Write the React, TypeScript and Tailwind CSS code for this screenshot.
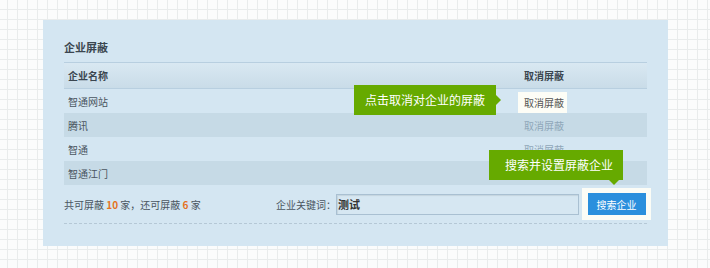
import React from "react";

const rows = [
  { name: "智通网站", active: true },
  { name: "腾讯", active: false },
  { name: "智通", active: false },
  { name: "智通江门", active: false },
];

export default function App() {
  return (
    <div
      className="w-[710px] h-[268px] pt-[20px] pl-[43px] bg-[#fbfcfc] bg-[linear-gradient(to_right,#e9ecec_1px,transparent_1px),linear-gradient(to_bottom,#e9ecec_1px,transparent_1px)] bg-[size:10px_10px] bg-[position:7px_9px]"
      style={{ fontFamily: '"Noto Sans CJK SC", "Noto Sans", sans-serif' }}
    >
      <div className="relative w-[625px] h-[226px] bg-[#d4e6f2] px-[21px] pt-[19px]">
        <div className="h-[23px] text-[11px] leading-[16px] font-bold text-[#3b4650]">企业屏蔽</div>

        {/* header */}
        <div className="flex h-[27px] items-center border-t border-b border-[#b8cfe0] bg-linear-to-b from-[#d9e8f2] to-[#c9dce8] text-[10px] font-bold text-[#3b4650]">
          <div className="flex-1 pl-[4px]">企业名称</div>
          <div className="w-[129px] pl-[6px]">取消屏蔽</div>
        </div>

        {rows.map((r, i) => (
          <div
            key={r.name}
            className={`flex h-[24px] items-center text-[10px] ${i % 2 === 1 ? "bg-[#c6dae6]" : ""}`}
          >
            <div className="flex-1 pl-[4px] text-[#4a5560]">{r.name}</div>
            <div className="w-[129px]">
              {r.active ? (
                <div className="mt-[3px] flex h-[21px] w-[49px] items-center pl-[6px] bg-[#fdfdf6] text-[#555]">取消屏蔽</div>
              ) : (
                <div className="pl-[6px] text-[#8fa7b9]">取消屏蔽</div>
              )}
            </div>
          </div>
        ))}

        {/* footer */}
        <div className="flex h-[39px] items-center border-b border-dashed border-[#b5c8d6] text-[10px] text-[#4a5560]">
          <div className="flex-1">
            共可屏蔽 <span className="font-bold text-[#e4731f]">10</span> 家，还可屏蔽{" "}
            <span className="font-bold text-[#e4731f]">6</span> 家
          </div>
          <div>企业关键词：</div>
          <div className="flex h-[21px] w-[243px] items-center border border-[#a9c0d2] bg-[#d6e7f2] pl-[1px] text-[11px] font-bold text-[#333] shadow-[inset_1px_1px_1px_rgba(0,0,0,0.08)]">
            测试
          </div>
          <div className="ml-[3px] -mr-[4px] flex h-[32px] w-[69px] items-center justify-center bg-[#fbfcf6]">
            <div className="flex h-[22px] w-[58px] items-center justify-center bg-[#2a8fdd] text-[10px] text-white">
              搜索企业
            </div>
          </div>
        </div>

        {/* tooltip 1 */}
        <div className="absolute left-[311px] top-[65px] flex h-[30px] w-[142px] items-center justify-center bg-[#66aa00] text-[12px] text-white">
          点击取消对企业的屏蔽
          <span className="absolute right-[-5px] top-[10px] h-0 w-0 border-y-[5px] border-l-[5px] border-y-transparent border-l-[#66aa00]" />
        </div>

        {/* tooltip 2 */}
        <div className="absolute left-[446px] top-[130px] flex h-[30px] w-[134px] items-center justify-center pl-[6px] bg-[#66aa00] text-[12px] text-white">
          搜索并设置屏蔽企业
          <span className="absolute left-[120px] bottom-[-5px] h-0 w-0 border-x-[5px] border-t-[5px] border-x-transparent border-t-[#66aa00]" />
        </div>
      </div>
    </div>
  );
}
